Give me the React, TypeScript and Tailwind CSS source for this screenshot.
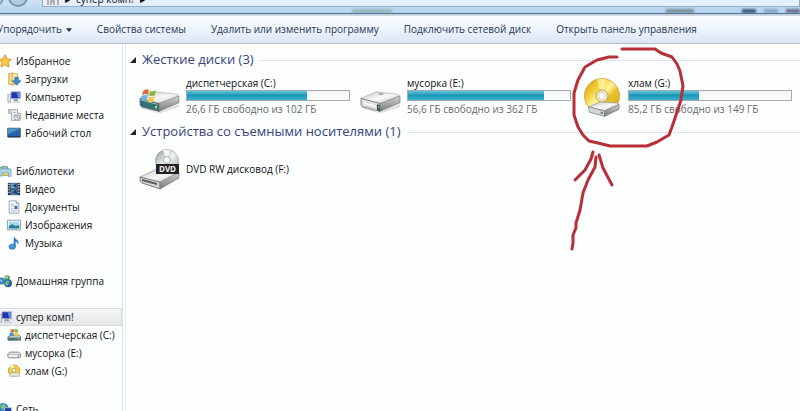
import type { ReactNode } from 'react';

type IconName =
  | 'star' | 'downloads' | 'computer' | 'recent' | 'desktop'
  | 'libraries' | 'video' | 'documents' | 'pictures' | 'music'
  | 'homegroup' | 'systemDisk' | 'disk' | 'disc' | 'network';

interface NavItem {
  icon: IconName;
  label: string;
}

interface NavGroup {
  root: NavItem;
  children: NavItem[];
  selected?: boolean;
  spacing: string;
}

const NAV_GROUPS: NavGroup[] = [
  {
    root: { icon: 'star', label: 'Избранное' },
    children: [
      { icon: 'downloads', label: 'Загрузки' },
      { icon: 'computer', label: 'Компьютер' },
      { icon: 'recent', label: 'Недавние места' },
      { icon: 'desktop', label: 'Рабочий стол' },
    ],
    spacing: 'mb-5',
  },
  {
    root: { icon: 'libraries', label: 'Библиотеки' },
    children: [
      { icon: 'video', label: 'Видео' },
      { icon: 'documents', label: 'Документы' },
      { icon: 'pictures', label: 'Изображения' },
      { icon: 'music', label: 'Музыка' },
    ],
    spacing: 'mb-5',
  },
  { root: { icon: 'homegroup', label: 'Домашняя группа' }, children: [], spacing: 'mb-[18px]' },
  {
    root: { icon: 'computer', label: 'супер комп!' },
    children: [
      { icon: 'systemDisk', label: 'диспетчерская (C:)' },
      { icon: 'disk', label: 'мусорка (E:)' },
      { icon: 'disc', label: 'хлам (G:)' },
    ],
    selected: true,
    spacing: 'mb-5',
  },
  { root: { icon: 'network', label: 'Сеть' }, children: [], spacing: '' },
];

const COMMANDS = [
  'Свойства системы',
  'Удалить или изменить программу',
  'Подключить сетевой диск',
  'Открыть панель управления',
];

const ICONS: Record<IconName, ReactNode> = {
  star: (
    <path d="M8 0.8l2.2 4.8 5.2.6-3.9 3.5 1.1 5.2L8 12.3l-4.6 2.6 1.1-5.2L.6 6.2l5.2-.6z" fill="#fbc94b" stroke="#d98b1c" />
  ),
  downloads: (
    <>
      <path d="M2 2l5-1 1 2v12l-6-1z" fill="#f3dc85" stroke="#c7a548" />
      <path d="M6 2h6v12H6z" fill="#f8e9a8" stroke="#cfb25c" />
      <path d="M9 6h4v4h3l-5 5-5-5h3z" fill="#3b8fd0" stroke="#23649c" strokeWidth=".7" />
    </>
  ),
  computer: (
    <>
      <path d="M1 5h3v9H1z" fill="#e2e6ec" stroke="#8d97a6" strokeWidth=".8" />
      <path d="M4.500 2h11v8h-11z" fill="#2137a8" stroke="#b5c2d8" />
      <path d="M11 2.500h4v7h-2z" fill="#6d8ce0" />
      <path d="M8 10.500h4l1 2H7z" fill="#8d97a6" />
      <path d="M6 13h9v1.500H6z" fill="#c3cad4" />
    </>
  ),
  recent: (
    <>
      <path d="M2 2h10v4h3v8H5V6H2z" fill="#f4f5f6" stroke="#8b959d" />
      <path d="M2 2c2 0 3 1 3 4M7 5h3M7 8h5M7 10h3" fill="none" stroke="#98a1a8" />
      <circle cx="11.500" cy="11" r="3" fill="#e8edf0" stroke="#8b979e" />
      <path d="M11.500 9.500V11H13" fill="none" stroke="#68747c" strokeWidth=".8" />
    </>
  ),
  desktop: (
    <>
      <path d="M.5 2.500h15v10H.5z" fill="#2666a8" stroke="#5b7288" />
      <path d="M1 3h14L1 9z" fill="#4d93c9" />
      <path d="M1 11.500h14v1.500H1z" fill="#22384f" />
    </>
  ),
  libraries: (
    <>
      <path d="M1 4h5l1 1.500h6V13H1z" fill="#f0d373" stroke="#bb9a3c" />
      <path d="M4 3h7v4H4z" fill="#7ec6a5" stroke="#5fa384" />
      <path d="M6 5l9 1v8l-3 .5V10H5v4l-3-.5V6z" fill="#a9d3e8" stroke="#6ba1bd" strokeWidth=".8" />
    </>
  ),
  video: (
    <>
      <path d="M1 1h14v14H1z" fill="#253443" />
      <path d="M4 1.500h8v6H4z" fill="#6aa7d4" />
      <path d="M4 8.500h8v6H4z" fill="#4f83ae" />
      <path d="M6 4l5-2v5zM6 12l4-3 2 5z" fill="#263a67" />
      <path d="M2.500 2v12M13.500 2v12" stroke="#dde6ee" strokeWidth="1.500" strokeDasharray="1.500 1.500" />
    </>
  ),
  documents: (
    <>
      <path d="M2.500 1h8l3 3v11h-11z" fill="#fbfcfd" stroke="#8e9aa6" />
      <path d="M10.500 1v3h3" fill="none" stroke="#8e9aa6" />
      <path d="M4.500 5h4M4.500 7h3M4.500 10h3M4.500 12.500h7" stroke="#a5b2bf" />
      <path d="M8.500 6.500h3.500v4H8.500z" fill="#3b6fa8" />
    </>
  ),
  pictures: (
    <>
      <path d="M.5 2.500h15v11H.5z" fill="#fff" stroke="#7b8f9e" />
      <path d="M2 4h12v8H2z" fill="#a5d8ef" />
      <path d="M2 9l4-2 4 2 4-1v4H2z" fill="#2b7f95" />
    </>
  ),
  music: (
    <>
      <path d="M8 1c1 3 6 3.500 4.500 8-.3-2-2-3-3-3v6.500H8z" fill="#2678bd" stroke="#2678bd" strokeWidth=".6" />
      <ellipse cx="6" cy="12.200" rx="3.800" ry="2.900" fill="#3f9ad8" stroke="#2067a5" strokeWidth=".7" />
    </>
  ),
  homegroup: (
    <>
      <circle cx="4" cy="8" r="4" fill="#3e7ec7" />
      <circle cx="10.500" cy="4.500" r="3" fill="#4aa35a" />
      <circle cx="11.500" cy="10.500" r="4.500" fill="#2d5fa6" />
      <path d="M9 8l3-1 1 3-3 4-2-3z" fill="#72c06f" />
      <path d="M2 6l3 1-1 3z" fill="#9ddad0" />
      <circle cx="10" cy="4" r="1.200" fill="#d5efdb" />
    </>
  ),
  systemDisk: (
    <>
      <path d="M1 10l4-2h9l1.500 2v4H1z" fill="#c3c9c6" stroke="#596662" strokeWidth=".8" />
      <path d="M1 11h14.500v3H1z" fill="#4e7878" />
      <path d="M4 2l4-1v3.500L4 5z" fill="#e56a34" />
      <path d="M8.500 1l4 1v3l-4-.5z" fill="#7fb544" />
      <path d="M3 5.500L7.500 5v4L3 9z" fill="#4a8fd6" />
      <path d="M8 5l4.500.5V9L8 8.500z" fill="#f4ca3e" />
      <path d="M12 12h2v1h-2z" fill="#90ee8e" />
    </>
  ),
  disk: (
    <>
      <path d="M1 9l2-2h10l2.500 2v3.500l-1 1H2l-1-1z" fill="#edeeef" stroke="#75797d" />
      <path d="M1.500 9.500h13.500" stroke="#aeb2b5" />
      <path d="M12 11h2v1h-2z" fill="#4f5957" />
    </>
  ),
  disc: (
    <>
      <circle cx="8" cy="7.500" r="6.500" fill="#f2cd46" stroke="#c29a2c" />
      <path d="M8 7.500L3 3a6.500 6.500 0 015-2z" fill="#fff2a8" />
      <circle cx="8" cy="7" r="2.200" fill="#fff" stroke="#bda256" />
      <path d="M3 11l3-1h6l2 1v3H3z" fill="#e7e5df" stroke="#a49f8d" strokeWidth=".7" />
    </>
  ),
  network: (
    <>
      <circle cx="6" cy="7" r="6" fill="#3587cb" />
      <path d="M2 4l5-2 2 3-4 4z" fill="#79c679" />
      <path d="M7.500 6.500h8v6h-8z" fill="#2039a3" stroke="#b8c8dc" />
      <path d="M9 14h6" stroke="#8b96a5" strokeWidth="1.500" />
    </>
  ),
};

function SmallIcon({ name }: { name: IconName }) {
  return (
    <svg viewBox="0 0 16 16" className="size-3.5 shrink-0" aria-hidden="true">
      {ICONS[name]}
    </svg>
  );
}

/** Grey external box shared by the hard drive icons. */
function DriveBody({ teal = false }: { teal?: boolean }) {
  return (
    <>
      <path d="M3 31l17 8 21-10v3L21 40 3 34z" fill="#00000022" />
      <path d="M2 22L17 14l22 3 2 2-20 9z" fill="url(#driveTop)" stroke="#9b9d9e" strokeWidth=".6" />
      <path d="M2 22l19 6v9.500L4 32q-2-1-2-3z" fill={teal ? '#347078' : '#d8dadb'} stroke="#606466" strokeWidth=".8" />
      <path d="M21 28l20-9v8L21 37.500z" fill="url(#driveSide)" stroke="#707375" strokeWidth=".6" />
      <path d="M3.500 23.500l16 5v1l-16-5z" fill="#ffffffaa" />
    </>
  );
}

function Gradients() {
  return (
    <svg className="absolute size-0" aria-hidden="true">
      <defs>
        <linearGradient id="driveTop" x1="0" y1="0" x2="1" y2="1">
          <stop offset="0" stopColor="#bfc1c2" />
          <stop offset=".5" stopColor="#f8f8f8" />
          <stop offset="1" stopColor="#c2c4c5" />
        </linearGradient>
        <linearGradient id="driveSide" x1="0" y1="0" x2="0" y2="1">
          <stop offset="0" stopColor="#d0d2d3" />
          <stop offset="1" stopColor="#77797a" />
        </linearGradient>
        <linearGradient id="gold" x1="0" y1="0" x2="1" y2="1">
          <stop offset="0" stopColor="#c99a17" />
          <stop offset=".3" stopColor="#f3cf35" />
          <stop offset=".48" stopColor="#fff3a0" />
          <stop offset=".62" stopColor="#eac02c" />
          <stop offset="1" stopColor="#d6a51c" />
        </linearGradient>
        <linearGradient id="silver" x1="0" y1="0" x2="1" y2="1">
          <stop offset="0" stopColor="#8f9894" />
          <stop offset=".5" stopColor="#eef2ef" />
          <stop offset="1" stopColor="#9da5a1" />
        </linearGradient>
      </defs>
    </svg>
  );
}

function SystemDriveIcon() {
  return (
    <svg viewBox="0 0 42 42" className="size-[42px]" aria-hidden="true">
      <g transform="translate(0 4) scale(1 .84)">
        <DriveBody teal />
        <path d="M17 31h2v3h-2z" fill="#8fe56f" />
      </g>
      <path d="M5 15q3-3 6-1l-1 5q-3-2-6 0z" fill="#de6b3c" />
      <path d="M12 15q3 1 6-1l-1 5q-3 2-6 0z" fill="#86b447" />
      <path d="M3.500 20q3-2 6 0l-1 5q-3-2-6 0z" fill="#6eb0e0" />
      <path d="M10.500 20.500q3 2 6 0l-1 5q-3 1-6 0z" fill="#efc845" />
    </svg>
  );
}

function DriveIcon() {
  return (
    <svg viewBox="0 0 42 42" className="size-[42px]" aria-hidden="true">
      <g transform="translate(0 4) scale(1 .84)">
        <DriveBody />
        <path d="M4 26l13 4v3L5 29z" fill="#f5f5f5" />
        <path d="M18 29l3 1v7l-3-1z" fill="#3b4643" />
        <path d="M19 31h1.500v3H19z" fill="#58b863" />
        <path d="M21 16l4 .5-2 1-4-.5z" fill="#777" />
      </g>
    </svg>
  );
}

function DiscDriveIcon() {
  return (
    <svg viewBox="0 0 42 42" className="size-[42px]" aria-hidden="true">
      <circle cx="22" cy="20" r="17.500" fill="url(#gold)" stroke="#c29420" strokeWidth=".7" />
      <path d="M22 20L17 3.500a17 17 0 019-.4z" fill="#fff6b4" opacity=".7" />
      <circle cx="22" cy="20" r="6" fill="#f2ead0" stroke="#ad8f3a" strokeWidth=".8" />
      <circle cx="22" cy="20" r="3.500" fill="#fff" stroke="#b9b09a" strokeWidth=".6" />
      <g transform="translate(7 17) scale(.8 .6)">
        <path d="M2 23l15-8 22 2 1 2-18 11z" fill="url(#driveTop)" stroke="#9b9d9e" />
        <path d="M2 23l20 7v9L3 32z" fill="#d4d6d7" stroke="#777" />
        <path d="M22 30l18-11v8L22 39z" fill="url(#driveSide)" stroke="#777" />
        <path d="M17 31l3 1v3l-3-1z" fill="#4d8c4f" />
      </g>
    </svg>
  );
}

function DvdDriveIcon() {
  return (
    <svg viewBox="0 0 42 42" className="size-[42px]" aria-hidden="true">
      <path d="M2 29l17-8 22 3-19 11z" fill="url(#driveTop)" stroke="#8b8d8e" strokeWidth=".6" />
      <path d="M2 29l20 5v7L4 35q-2-1-2-3z" fill="#d0d2d3" stroke="#606466" strokeWidth=".8" />
      <path d="M22 34l19-10v6L22 41z" fill="url(#driveSide)" stroke="#707375" strokeWidth=".6" />
      <path d="M4 31l15 4v2L4 33z" fill="#55595a" />
      <circle cx="29" cy="13" r="11.500" fill="url(#silver)" stroke="#87918c" strokeWidth=".6" />
      <path d="M29 13L25 2l7-.5z" fill="#fff" opacity=".8" />
      <circle cx="29" cy="12" r="3.500" fill="#f7f8f7" stroke="#8b938f" strokeWidth=".7" />
      <path d="M18 16h23v10H18z" fill="#202322" />
      <text x="29.500" y="24" textAnchor="middle" fontSize="8" fontWeight="700" fill="#f4f4f4" fontFamily="Open Sans, sans-serif">
        DVD
      </text>
    </svg>
  );
}

const DRIVES = [
  { name: 'диспетчерская (C:)', info: '26,6 ГБ свободно из 102 ГБ', used: 74, icon: <SystemDriveIcon /> },
  { name: 'мусорка (E:)', info: '56,6 ГБ свободно из 362 ГБ', used: 84, icon: <DriveIcon /> },
  { name: 'хлам (G:)', info: '85,2 ГБ свободно из 149 ГБ', used: 43, icon: <DiscDriveIcon /> },
];

function NavRow({ item, child = false, selected = false }: { item: NavItem; child?: boolean; selected?: boolean }) {
  return (
    <a
      href="#"
      aria-current={selected ? 'page' : undefined}
      className={`flex h-[18px] items-center gap-1 whitespace-nowrap border ${child ? 'pl-1.5' : '-ml-[3px]'} ${
        selected ? 'border-[#d6d8da] bg-linear-to-b from-[#f8f8f9] to-[#e5e6e8]' : 'border-transparent'
      }`}
    >
      <SmallIcon name={item.icon} />
      {item.label}
    </a>
  );
}

function SectionHeading({ children }: { children: ReactNode }) {
  return (
    <h2 className="flex h-5 items-center whitespace-nowrap text-[13px] text-[#34437c]">
      <button className="flex items-center gap-1.5">
        <svg viewBox="0 0 6 6" className="size-1.5" aria-hidden="true">
          <path d="M6 0v6H0z" fill="#222" />
        </svg>
        {children}
      </button>
      <span className="ml-1.5 h-px flex-1 bg-[#e1e4e8]" />
    </h2>
  );
}

function Drive({ name, info, used, icon }: (typeof DRIVES)[number]) {
  return (
    <li className="flex gap-1.5 pl-1">
      <div className="w-[42px] shrink-0">{icon}</div>
      <div className="w-[164px] whitespace-nowrap">
        <div className="h-3.5 leading-3.5">{name}</div>
        <div
          role="progressbar"
          aria-label={name}
          aria-valuenow={used}
          className="h-[11px] border border-[#a5a9ad] bg-linear-to-b from-[#f3f3f4] to-white"
        >
          <div
            className="h-full bg-linear-to-b from-[#5cc6dc] via-[#1c95b6] to-[#35b5cf]"
            style={{ width: `${used}%` }}
          />
        </div>
        <div className="h-4 leading-4 text-[#65696c]">{info}</div>
      </div>
    </li>
  );
}

/** Hand-drawn circle and arrow lying over the last drive. */
function Marker() {
  return (
    <svg
      viewBox="565 44 125 210"
      className="pointer-events-none absolute left-[439px] top-0 h-[210px] w-[125px]"
      fill="none"
      stroke="#b82f38"
      strokeWidth="3"
      strokeLinecap="round"
      strokeLinejoin="round"
      aria-hidden="true"
    >
      <path d="M617 57L609 57 597 60 585 67 578 80 574 93 574 115 578 127 583 135 589 141 598 143 610 146 647 146 657 142 669 135 672 127 676 115 681 100 683 86 680 71 677 64 672 57 661 53 655 49 622 49" />
      <path d="M593 152L591 159 585 170 581 174 575 180M596 157L595 167 588 180 583 193 580 210 576 223 576 228 573 235 573 243 572 249M599 155L603 168 612 185" />
    </svg>
  );
}

export default function App() {
  return (
    <div className="flex h-screen flex-col overflow-hidden bg-[#fdfefe] font-['Open_Sans','Noto_Sans',sans-serif] text-[10px] text-[#0d0f12]">
      <Gradients />

      {/* Address bar, scrolled mostly out of view */}
      <header className="flex h-[14px] shrink-0 flex-col justify-end overflow-hidden border-b border-[#49708f] bg-linear-to-b from-[#cfe2f5] to-[#b3d3ef]">
        <div className="flex h-5 shrink-0 items-end">
          <div className="flex w-[42px] shrink-0 items-end">
            <button aria-label="Назад" className="-ml-4 size-5 rounded-full border border-[#56718b] bg-[#a8c4dd]" />
            <button aria-label="Вперёд" className="ml-1 size-5 rounded-full border-2 border-[#7891a8] bg-[#b3cde4]" />
          </div>
          <nav aria-label="Адрес" className="flex h-5 flex-1 items-end gap-1.5 border border-[#8faecb] bg-[#e6f0fc] px-1 leading-3.5">
            <svg viewBox="0 0 12 12" className="size-3" aria-hidden="true">
              <path d="M1 11V4l5-3 5 3v7M4 11V7h3v4" fill="none" stroke="#a8949a" strokeWidth="1.500" />
            </svg>
            <span>▸</span>
            <a href="#">супер комп!</a>
            <span>▸</span>
          </nav>
        </div>
        {/* Window glass with the desktop shining through */}
        <div className="flex h-1.5 shrink-0 justify-end gap-2 pt-0.5 blur-[1px]">
          <span className="mr-auto ml-[44%] w-10 bg-[#94b6bd]" />
          <span className="mr-10 w-7 bg-[#7b919c]" />
          <span className="w-3.5 bg-[#3d5c80]" />
          <span className="w-3.5 bg-[#8aa5c4]" />
          <span className="w-3.5 bg-[#6d6d8c]" />
        </div>
      </header>

      {/* Command bar */}
      <div
        role="toolbar"
        className="flex h-[30px] shrink-0 items-center gap-[25px] whitespace-nowrap border-b border-t-2 border-b-[#b4bfcb] border-t-[#cdd6df] bg-linear-to-b from-[#f9fcff] via-[#edf4fc] to-[#dbe6f3] text-[#1f3552]"
      >
        <button className="-ml-[3px] flex items-center gap-1">
          Упорядочить
          <svg viewBox="0 0 8 5" className="h-1 w-1.5" aria-hidden="true">
            <path d="M0 0h8L4 5z" fill="#20354f" />
          </svg>
        </button>
        {COMMANDS.map((label) => (
          <button key={label}>{label}</button>
        ))}
      </div>

      <div className="flex min-h-0 flex-1">
        {/* Navigation pane */}
        <nav className="w-[123px] shrink-0 border-r border-[#dbe5ee] pt-2" aria-label="Папки">
          {NAV_GROUPS.map(({ root, children, selected, spacing }) => (
            <div key={root.label} className={spacing}>
              <NavRow item={root} selected={selected} />
              {children.map((item) => (
                <NavRow key={item.label} item={item} child />
              ))}
            </div>
          ))}
        </nav>

        {/* Drives */}
        <main className="relative ml-0.5 min-w-0 flex-1 border-l border-[#e4eef6] pl-1 pt-1.5">
          <SectionHeading>Жесткие диски (3)</SectionHeading>
          <ul className="mt-1.5 grid grid-cols-[repeat(auto-fill,221px)] pl-1">
            {DRIVES.map((drive) => (
              <Drive key={drive.name} {...drive} />
            ))}
          </ul>
          <div className="mt-1">
            <SectionHeading>Устройства со съемными носителями (1)</SectionHeading>
          </div>
          <div className="mt-1.5 flex items-center gap-1.5 pl-2">
            <DvdDriveIcon />
            DVD RW дисковод (F:)
          </div>
          <Marker />
        </main>
      </div>
    </div>
  );
}
